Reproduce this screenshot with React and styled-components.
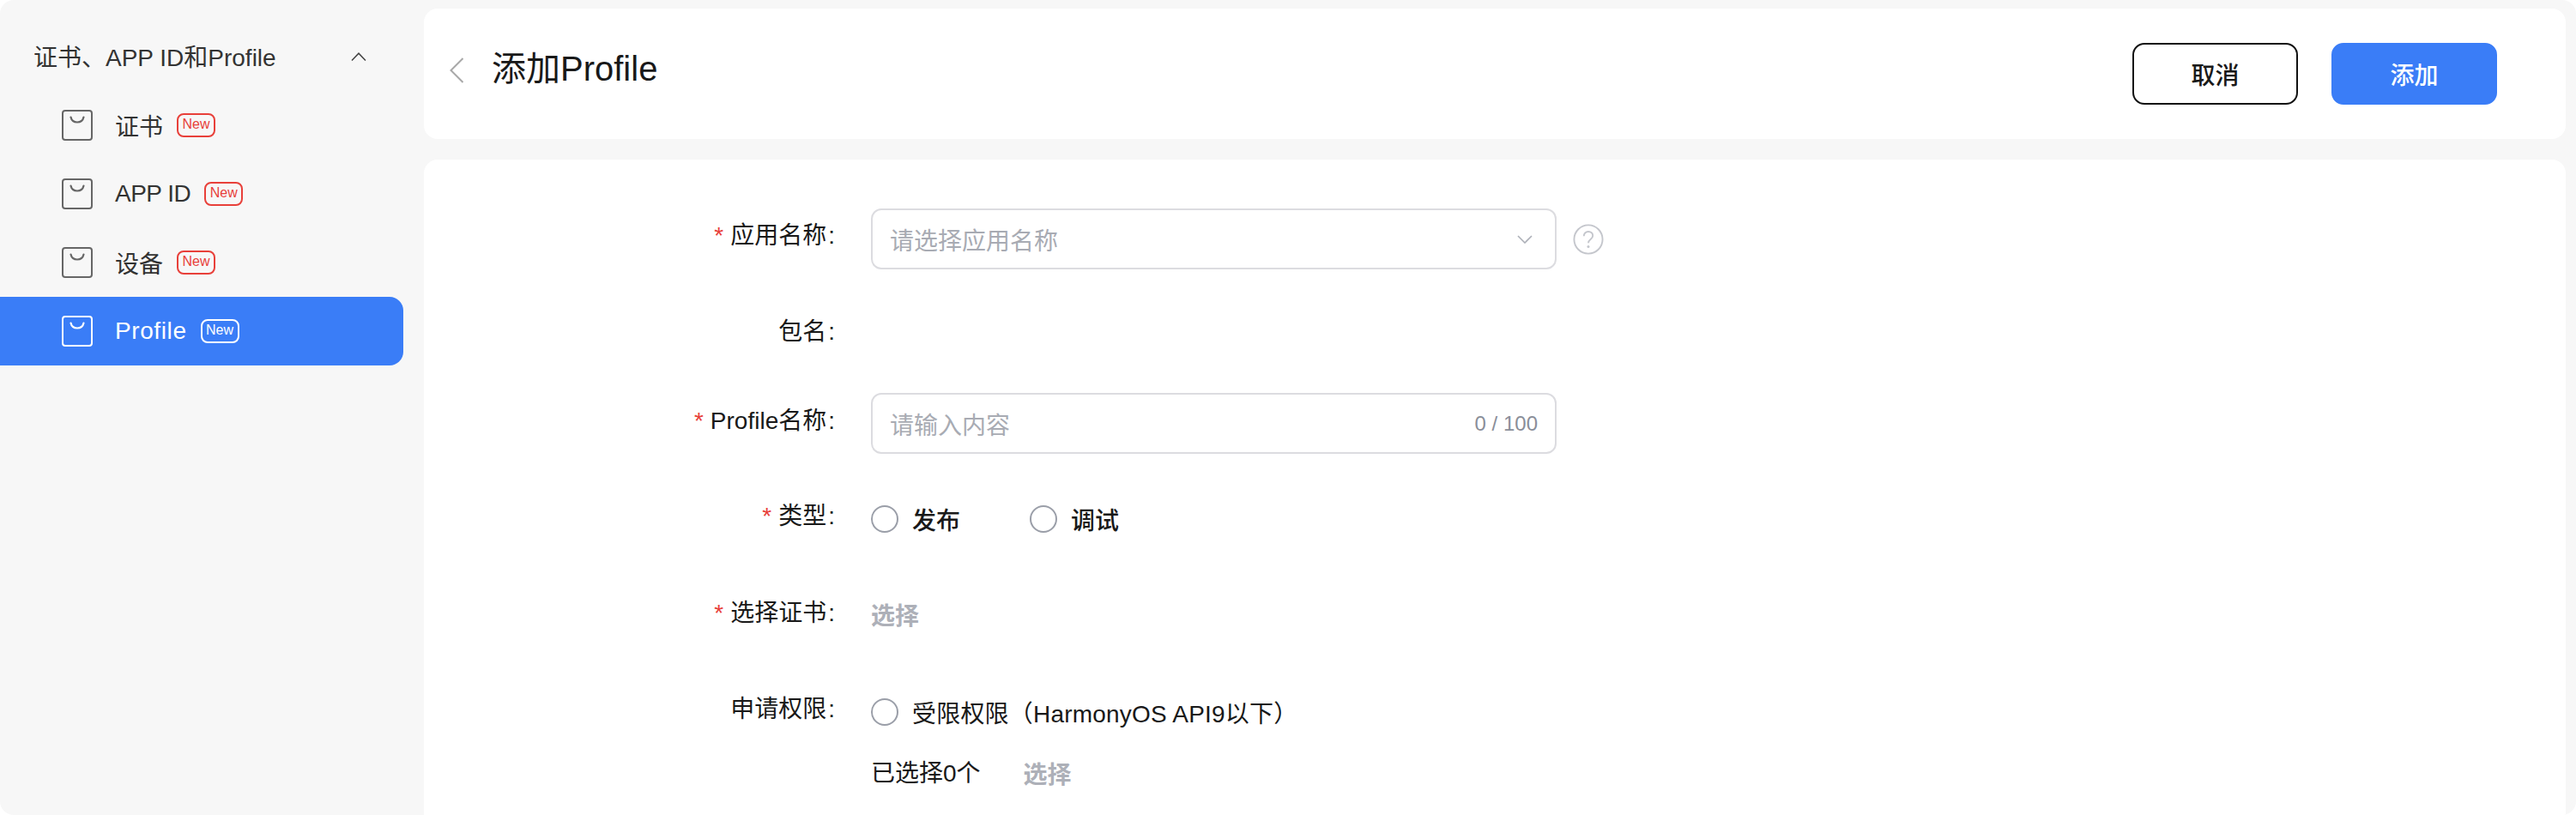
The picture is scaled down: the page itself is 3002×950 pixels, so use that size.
import React from "react";
import styled, { createGlobalStyle } from "styled-components";

const Global = createGlobalStyle`
  html, body { margin: 0; padding: 0; background: #fff; }
  body { font-family: "Liberation Sans", "Noto Sans CJK SC", sans-serif; color: #191919; }
`;

const Page = styled.div`
  display: flex;
  height: 950px;
  overflow: hidden;
  background: #f7f7f7;
  border-radius: 16px;
`;

const Sidebar = styled.nav`
  flex: 0 0 470px;
  padding-top: 26px;
`;

const GroupHead = styled.div`
  display: flex;
  align-items: center;
  justify-content: space-between;
  box-sizing: border-box;
  height: 80px;
  padding: 0 43px 2px 39px;
  font-size: 28px;
  color: #333;
`;

const HeadChevron = styled.svg`
  width: 18px;
  height: 10px;
  margin-top: 2px;
`;

const MenuRow = styled.div`
  display: flex;
  align-items: center;
  height: 80px;
  padding-left: 72px;
  border-radius: 0 16px 16px 0;
  font-size: 28px;
  background: ${(p) => (p.$active ? "#3a7df7" : "transparent")};
  color: ${(p) => (p.$active ? "#fff" : "#333")};
`;

const MenuLabel = styled.span`
  margin: 0 16px 0 26px;
  letter-spacing: ${(p) => p.$track || 0}px;
`;

const Badge = styled.span`
  display: flex;
  align-items: center;
  justify-content: center;
  box-sizing: border-box;
  width: 45px;
  height: 28px;
  border: 2px solid ${(p) => (p.$active ? "#fff" : "#e8403a")};
  border-radius: 8px;
  font-size: 16px;
  padding-bottom: 2px;
  color: ${(p) => (p.$active ? "#fff" : "#e8403a")};
`;

const Main = styled.main`
  flex: 1;
  display: flex;
  flex-direction: column;
  gap: 24px;
  padding: 10px 12px 0 24px;
  min-width: 0;
`;

const TopBar = styled.header`
  display: flex;
  align-items: center;
  flex: 0 0 152px;
  box-sizing: border-box;
  padding: 0 80px 0 30px;
  background: #fff;
  border-radius: 16px;
`;

const BackIcon = styled.svg`
  width: 16px;
  height: 30px;
  margin-bottom: 8px;
`;

const Title = styled.h1`
  margin: 0 auto 12px 33px;
  font-size: 40px;
  font-weight: 400;
  line-height: 48px;
  color: #191919;
`;

const Button = styled.button`
  box-sizing: border-box;
  width: 193px;
  height: 72px;
  margin-left: 39px;
  border-radius: 14px;
  border: 2px solid ${(p) => (p.$primary ? "#3a7df7" : "#111")};
  background: ${(p) => (p.$primary ? "#3a7df7" : "#fff")};
  color: ${(p) => (p.$primary ? "#fff" : "#191919")};
  font: 500 28px "Liberation Sans", "Noto Sans CJK SC", sans-serif;
  &:first-of-type { margin-left: 0; }
`;

const FormCard = styled.section`
  flex: 1;
  background: #fff;
  border-radius: 16px 16px 0 0;
  padding-top: 57px;
`;

const FormRow = styled.div`
  display: grid;
  grid-template-columns: 479px auto;
  column-gap: 42px;
  align-items: start;
  height: ${(p) => p.$h}px;
`;

const Label = styled.label`
  display: block;
  text-align: right;
  font-size: 28px;
  line-height: 40px;
  color: #191919;
  padding-top: ${(p) => p.$top || 0}px;
`;

const Star = styled.span`
  color: #e8403a;
  margin-right: 8px;
`;

const Colon = styled.span`
  margin-left: 2px;
`;

const FieldLine = styled.div`
  display: flex;
  align-items: center;
  gap: 19px;
`;

const Field = styled.div`
  display: flex;
  align-items: center;
  justify-content: space-between;
  box-sizing: border-box;
  width: 799px;
  height: 71px;
  padding: 0 ${(p) => p.$right || 20}px 0 20px;
  border: 2px solid #dcdce0;
  border-radius: 12px;
  font-size: 28px;
  color: #a8abb3;
`;

const Counter = styled.span`
  font-size: 24px;
  color: #8a8e99;
`;

const RadioLine = styled.div`
  display: flex;
  align-items: center;
  height: 40px;
  margin-top: ${(p) => p.$top || 0}px;
`;

const RadioDot = styled.span`
  box-sizing: border-box;
  width: 32px;
  height: 32px;
  border: 2px solid #9a9ea8;
  border-radius: 50%;
  margin-right: 16px;
`;

const RadioText = styled.span`
  font-size: 28px;
  font-weight: ${(p) => (p.$plain ? 400 : 500)};
  letter-spacing: ${(p) => (p.$plain ? 0.2 : 0)}px;
  color: #191919;
  margin-right: ${(p) => p.$gap || 0}px;
`;

const LinkText = styled.span`
  font-size: 28px;
  font-weight: 600;
  line-height: 40px;
  color: #adb0b8;
  margin-left: ${(p) => p.$left || 0}px;
  display: inline-block;
  padding-top: ${(p) => p.$top || 0}px;
`;

const SelectedLine = styled.div`
  display: flex;
  margin-top: 32px;
  font-size: 28px;
  line-height: 40px;
  color: #191919;
`;

const Bag = ({ color }) => (
  <svg width="36" height="36" viewBox="0 0 36 36" fill="none">
    <rect x="1" y="1" width="34" height="34" rx="3" stroke={color} strokeWidth="2" />
    <path d="M10.500 8.500c.8 3.500 3.800 6 7.500 6s6.700-2.500 7.500-6" stroke={color} strokeWidth="2.200" strokeLinecap="round" />
  </svg>
);

const items = [
  { name: "证书" },
  { name: "APP ID", track: -0.5 },
  { name: "设备" },
  { name: "Profile", track: 0.6, active: true },
];

export default function App() {
  return (
    <Page>
      <Global />
      <Sidebar>
        <GroupHead>
          证书、APP ID和Profile
          <HeadChevron viewBox="0 0 18 10" fill="none">
            <path d="M1 9.500L9 1.200 17 9.500" stroke="#444" strokeWidth="1.500" />
          </HeadChevron>
        </GroupHead>
        {items.map((it) => (
          <MenuRow key={it.name} $active={it.active}>
            <Bag color={it.active ? "#fff" : "#666"} />
            <MenuLabel $track={it.track}>{it.name}</MenuLabel>
            <Badge $active={it.active}>New</Badge>
          </MenuRow>
        ))}
      </Sidebar>
      <Main>
        <TopBar>
          <BackIcon viewBox="0 0 16 30" fill="none">
            <path d="M15.500 1L1.500 15l14 14" stroke="#a8a8a8" strokeWidth="2" />
          </BackIcon>
          <Title>添加Profile</Title>
          <Button>取消</Button>
          <Button $primary>添加</Button>
        </TopBar>
        <FormCard>
          <FormRow $h={122}>
            <Label $top={12}><Star>*</Star>应用名称<Colon>:</Colon></Label>
            <FieldLine>
              <Field $right={26}>
                请选择应用名称
                <svg width="18" height="10" viewBox="0 0 18 10" fill="none">
                  <path d="M1 1l8 8 8-8" stroke="#adb0b8" strokeWidth="1.600" />
                </svg>
              </Field>
              <svg width="36" height="36" viewBox="0 0 38 38" fill="none">
                <circle cx="19" cy="19" r="17.500" stroke="#c4c6cc" strokeWidth="2" />
                <path d="M13.500 15c0-3.200 2.400-5.500 5.500-5.500s5.500 2 5.500 5c0 4.500-5.500 4.500-5.500 9" stroke="#c4c6cc" strokeWidth="2" />
                <circle cx="19" cy="28" r="1.600" fill="#c4c6cc" />
              </svg>
            </FieldLine>
          </FormRow>
          <FormRow $h={93}>
            <Label $top={2}>包名<Colon>:</Colon></Label>
          </FormRow>
          <FormRow $h={124}>
            <Label $top={13}><Star>*</Star>Profile名称<Colon>:</Colon></Label>
            <Field>
              请输入内容
              <Counter>0 / 100</Counter>
            </Field>
          </FormRow>
          <FormRow $h={111}>
            <Label><Star>*</Star>类型<Colon>:</Colon></Label>
            <RadioLine $top={3}>
              <RadioDot />
              <RadioText $gap={81}>发布</RadioText>
              <RadioDot />
              <RadioText>调试</RadioText>
            </RadioLine>
          </FormRow>
          <FormRow $h={114}>
            <Label $top={2}><Star>*</Star>选择证书<Colon>:</Colon></Label>
            <LinkText $top={6}>选择</LinkText>
          </FormRow>
          <FormRow $h={130}>
            <Label>申请权限<Colon>:</Colon></Label>
            <div>
              <RadioLine $top={3}>
                <RadioDot />
                <RadioText $plain>受限权限（HarmonyOS API9以下）</RadioText>
              </RadioLine>
              <SelectedLine>
                已选择0个
                <LinkText $left={50} $top={2}>选择</LinkText>
              </SelectedLine>
            </div>
          </FormRow>
        </FormCard>
      </Main>
    </Page>
  );
}
